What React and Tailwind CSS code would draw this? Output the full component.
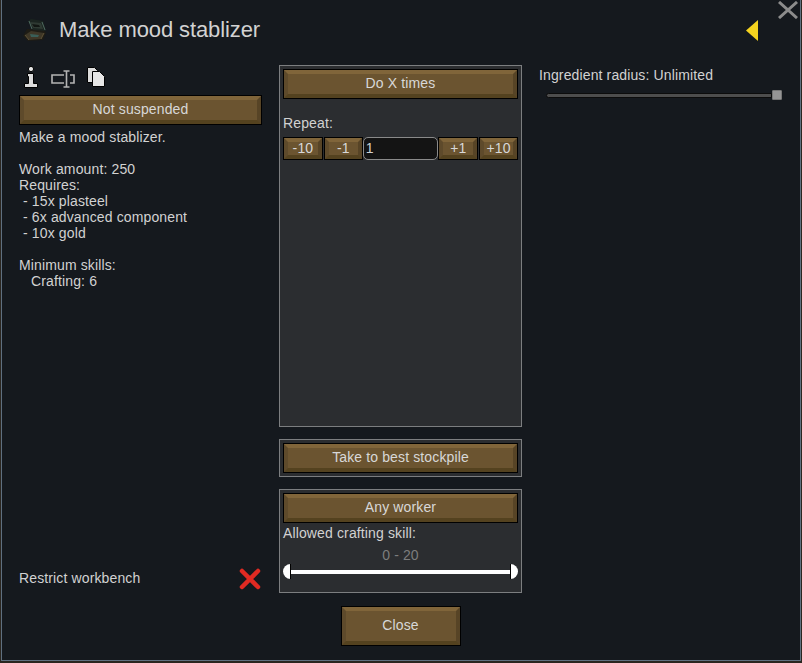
// brown bevelled button used all over the dialog
function Btn({ children, className = '' }) {
  return (
    <div className={`border border-black ${className}`}>
      <div className="flex h-full items-center justify-center border-[4px] border-t-[#80653a] border-l-[#5e4a2b] border-r-[#574426] border-b-[#54421f] bg-[#6b5430] pb-[2px] text-[#d8d8d8]">
        {children}
      </div>
    </div>
  );
}

function Chest() {
  return (
    <svg width="24" height="22" viewBox="0 0 24 22">
      <path d="M0 17 L4 10 L21 11 L23 14 L20 21 L5 22 Z" fill="#1e1c15" />
      <path d="M5 2 L8 0 L20 2 L23 12 L10 11 Z" fill="#1b2420" />
      <path d="M7 3 L18 4 L20 10 L10 9 Z" fill="#2f3a33" />
      <path d="M9 5 L16 6 L17 8 L11 8 Z" fill="#121613" />
      <path d="M2 16 L8 12 L21 14 L18 20 L6 21 Z" fill="#3e3727" />
      <path d="M7 15 L16 16 L15 18 L8 18 Z" fill="#3a5f58" />
      <path d="M6 2 L9 10 M19 3 L22 11" stroke="#4f6a60" strokeWidth="1" />
      <path d="M2 16 L6 21 M21 14 L18 20" stroke="#5f5236" strokeWidth="1" />
    </svg>
  );
}

function InfoIcon() {
  return (
    <svg width="14" height="22" viewBox="0 0 14 22">
      <circle cx="7" cy="3" r="2.6" fill="#e6e6e6" stroke="#000" strokeWidth="1" />
      <path d="M3.5 7.5 H9.5 V17.5 H13.5 V21.5 H0.5 V17.5 H4.5 V10.5 H3.5 Z" fill="#dcdcdc" stroke="#000" strokeWidth="1" />
    </svg>
  );
}

function RenameIcon() {
  return (
    <svg width="24" height="18" viewBox="0 0 24 18" fill="none" stroke="#b4b4b4" strokeWidth="1.6">
      <path d="M13 5 H1 V13 H13" />
      <path d="M19 5 H23 V13 H19" />
      <path d="M12.5 1 H18.5 M15.5 1 V17 M12.5 17 H18.5" />
    </svg>
  );
}

function CopyIcon() {
  return (
    <svg width="18" height="20" viewBox="0 0 18 20">
      <path d="M0.5 0.5 H7.5 L10.5 3.5 V15.5 H0.5 Z" fill="#dcdcdc" stroke="#000" strokeWidth="1" />
      <path d="M5.5 4.5 H12.5 L17.5 9.5 V19.5 H5.5 Z" fill="#e6e6e6" stroke="#000" strokeWidth="1" />
    </svg>
  );
}

export default function App() {
  return (
    <div className="h-[663px] w-[802px] overflow-hidden bg-[#2a2620] font-['Liberation_Sans',Arial,sans-serif] text-[14px] leading-4 tracking-[0.13px] text-[#d2d2d2]">
      <div className="relative ml-px h-[661px] w-[800px] border-x border-b border-[#5f7080] bg-[#15191e]">
        <svg className="absolute right-[2px] top-[1px]" width="20" height="18" viewBox="0 0 20 18">
          <path d="M1 1 L19 17 M19 1 L1 17" stroke="#8c8c8c" strokeWidth="3" />
        </svg>

        <div className="flex h-[65px] items-center pb-[5px] pl-[21px] pr-[42px]">
          <Chest />
          <h1 className="ml-[12px] flex-1 text-[22px] font-normal tracking-[-0.1px]">Make mood stablizer</h1>
          <svg width="12" height="21" viewBox="0 0 12 21">
            <path d="M12 0 V21 L0 10.5 Z" fill="#f5d31f" />
          </svg>
        </div>

        <div className="grid h-[528px] grid-cols-[243px_243px_243px] gap-x-[17px] pl-[17px]">
          <div className="flex flex-col">
            <div className="flex h-[30px] items-start pl-[5px] pt-px">
              <InfoIcon />
              <span className="ml-[13px] mt-[4px]"><RenameIcon /></span>
              <span className="ml-[12px] mt-[1px]"><CopyIcon /></span>
            </div>
            <Btn className="h-[30px]">Not suspended</Btn>
            <div className="mt-[4px]">
              <p>Make a mood stablizer.</p>
              <p className="mt-4">Work amount: 250</p>
              <p>Requires:</p>
              <p>&nbsp;- 15x plasteel</p>
              <p>&nbsp;- 6x advanced component</p>
              <p>&nbsp;- 10x gold</p>
              <p className="mt-4">Minimum skills:</p>
              <p>&nbsp;&nbsp;&nbsp;Crafting: 6</p>
            </div>
            <div className="mt-auto mb-[3px] flex items-center justify-between">
              <span className="mb-[2px]">Restrict workbench</span>
              <svg className="mr-px" width="22" height="22" viewBox="0 0 22 22">
                <path d="M3 3 L19 19 M19 3 L3 19" stroke="#e02a22" strokeWidth="4.5" strokeLinecap="round" />
              </svg>
            </div>
          </div>

          <div className="flex flex-col">
            <div className="h-[362px] border border-[#7c7e80] bg-[#2b2d30] p-[3px]">
              <Btn className="h-[30px]">Do X times</Btn>
              <p className="mt-[16px]">Repeat:</p>
              <div className="mt-[6px] flex h-[23px] gap-px">
                <Btn className="w-[40px]">-10</Btn>
                <Btn className="w-[39px]">-1</Btn>
                <div className="-mx-px w-[76px] rounded-[5px] border border-[#8a8a8a] bg-[#141414] pl-[2px] leading-[21px]">1</div>
                <Btn className="w-[40px]">+1</Btn>
                <Btn className="w-[39px]">+10</Btn>
              </div>
            </div>
            <div className="mt-[12px] h-[38px] border border-[#7c7e80] bg-[#2b2d30] p-[3px]">
              <Btn className="h-[30px]">Take to best stockpile</Btn>
            </div>
            <div className="mt-[12px] h-[104px] border border-[#7c7e80] bg-[#2b2d30] p-[3px]">
              <Btn className="h-[30px]">Any worker</Btn>
              <p className="mt-[2px]">Allowed crafting skill:</p>
              <p className="mt-[6px] text-center text-[#7d7d7d]">0 - 20</p>
              <div className="mt-px flex h-[15px] items-center">
                <div className="h-[15px] w-[8px] rounded-l-full border-r border-black bg-white" />
                <div className="h-[4px] flex-1 bg-white" />
                <div className="h-[15px] w-[8px] rounded-r-full border-l border-black bg-white" />
              </div>
            </div>
          </div>

          <div>
            <p className="mt-[2px]">Ingredient radius: Unlimited</p>
            <div className="ml-[7px] mt-[7px] flex h-[10px] items-center">
              <div className="h-[5px] flex-1 rounded-l-sm border border-[#0c0c0c] bg-[#4d4d4d]" />
              <div className="h-[10px] w-[10px] rounded-[1px] border border-[#777] bg-[#959595]" />
            </div>
          </div>
        </div>

        <div className="mt-[13px] flex justify-center pr-[1px]">
          <Btn className="h-[40px] w-[120px]">Close</Btn>
        </div>
      </div>
    </div>
  );
}
